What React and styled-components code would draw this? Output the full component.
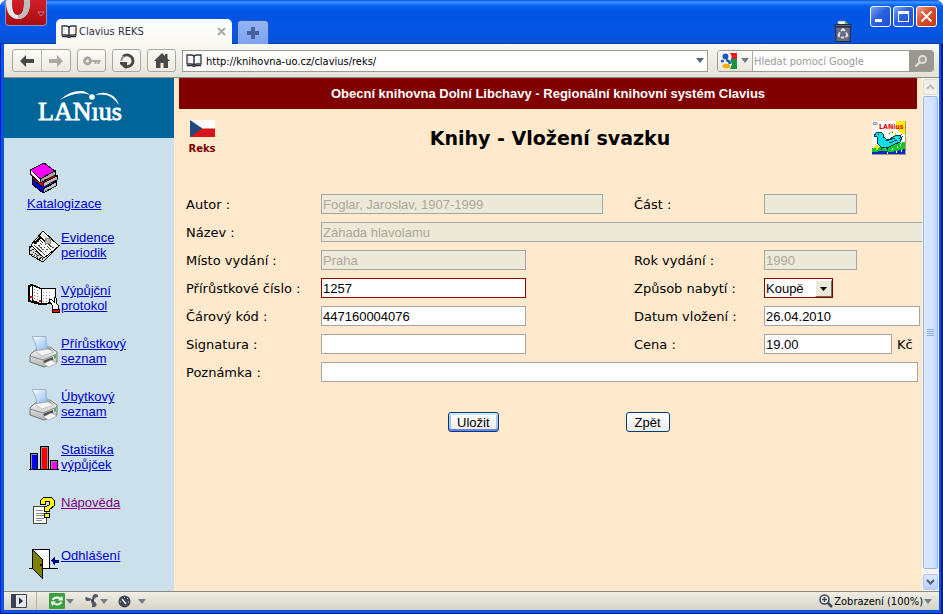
import React from "react";
import styled, { createGlobalStyle, css } from "styled-components";

const uiFont = '"DejaVu Sans Condensed", "DejaVu Sans", sans-serif';
const wideFont = '"DejaVu Sans", sans-serif';
const textFont = '"Liberation Sans", sans-serif';

const GlobalStyle = createGlobalStyle`
  *, *::before, *::after { box-sizing: border-box; }
  body { margin: 0; background: #fff; font-family: ${textFont}; font-size: 13px; color: #000; }
  button, input, select { font: inherit; color: inherit; margin: 0; }
  button { padding: 0; }
  svg { display: block; flex: none; }
`;

/* ---------- window frame ---------- */

const Frame = styled.div`
  display: flex;
  flex-direction: column;
  height: 100vh;
  padding: 0 4px 4px;
  border-radius: 8px 8px 0 0;
  background: #0855e0;
  box-shadow: inset 1px 0 #0019cf, inset -2px -1px #001ca0;
  overflow: hidden;
`;

const TitleBar = styled.header`
  display: flex;
  align-items: flex-end;
  flex: none;
  height: 44px;
  margin: 0 -4px;
  padding: 0 6px 0 5px;
  background: linear-gradient(#0a4fd8 0, #3a93ff 2px, #0560ee 6px, #0054e3 12px, #0556e6 30px, #0a50d2 43px, #003090 44px);
`;

const OperaButton = styled.button`
  align-self: flex-start;
  width: 42px;
  height: 26px;
  margin-right: 9px;
  border: 1px solid #8f8fd0;
  border-top: 0;
  border-radius: 0 0 4px 4px;
  background: linear-gradient(#d0202a, #a80c12);
  overflow: hidden;
`;

const Tab = styled.div`
  display: flex;
  align-items: center;
  gap: 2px;
  width: 176px;
  height: 25px;
  padding: 0 6px 0 5px;
  border-radius: 5px 5px 0 0;
  background: linear-gradient(#fff, #f9f8f2);
  font: 11px ${uiFont};
  color: #2c3045;
`;

const TabTitle = styled.span`
  flex: 1;
  white-space: nowrap;
`;

const PlainButton = styled.button`
  display: flex;
  align-items: center;
  justify-content: center;
  border: 0;
  background: none;
`;

const NewTab = styled(PlainButton)`
  width: 32px;
  height: 24px;
  margin-left: 5px;
  border-radius: 4px 4px 0 0;
  border: 1px solid #2456bd;
  border-bottom: 0;
  background: linear-gradient(#93b4f2, #7da4ee);
`;

const Trash = styled(PlainButton)`
  margin: 0 18px 1px auto;
`;

const WindowButtons = styled.div`
  display: flex;
  align-self: flex-start;
  gap: 2px;
  padding-top: 6px;
`;

const WindowButton = styled(PlainButton)`
  width: 21px;
  height: 21px;
  border: 1px solid #fff;
  border-radius: 3px;
  background: ${(p) => (p.$close ? "linear-gradient(135deg, #f0a088, #dd4d2b 45%, #c03a18)" : "linear-gradient(135deg, #7ea4f5, #2c62e0 45%, #1c4fd0)")};
`;

/* ---------- toolbar ---------- */

const Toolbar = styled.nav`
  display: flex;
  align-items: center;
  gap: 6px;
  flex: none;
  height: 34px;
  padding: 0 5px 0 8px;
  background: linear-gradient(#f9f8f2, #e4e1d8);
  border-bottom: 1px solid #908e84;
  font: 11px ${uiFont};
`;

const ToolGroup = styled.div`
  display: flex;
  height: 23px;
  border: 1px solid #a9a79e;
  border-radius: 3px;
  background: linear-gradient(#fcfbf8, #ebe9e0);
`;

const ToolButton = styled(PlainButton)`
  width: ${(p) => p.$width || 27}px;
  & + & { border-left: 1px solid #b4b2a8; }
`;

const AddressBar = styled.div`
  display: flex;
  align-items: center;
  gap: 3px;
  flex: 1;
  height: 22px;
  padding: 0 3px;
  border: 1px solid #9c9a92;
  background: #fff;
`;

const ToolInput = styled.input`
  flex: 1;
  min-width: 0;
  height: 20px;
  padding: 1px 1px 0;
  border: 0;
  outline: 0;
  background: none;
  &::placeholder { color: #999; opacity: 1; }
`;

const SearchBox = styled.div`
  display: flex;
  width: 217px;
  height: 22px;
  margin-left: 3px;
  border: 1px solid #9c9a92;
  border-radius: 3px;
  background: #fff;
  overflow: hidden;
`;

const SearchEngine = styled(PlainButton)`
  gap: 4px;
  width: 35px;
  border-right: 1px solid #a9a79e;
  background: linear-gradient(#fcfbf8, #e9e6dd);
`;

const SearchButton = styled(PlainButton)`
  width: 24px;
  background: #989790;
`;

/* ---------- page ---------- */

const Viewport = styled.div`
  display: flex;
  flex: 1;
  min-height: 0;
  background: #ffe9cc;
`;

const Sidebar = styled.aside`
  flex: none;
  width: 170px;
  background: #cce0eb;
  overflow: hidden;
`;

const Brand = styled.div`
  height: 60px;
  background: #006699;
`;

const Menu = styled.nav`
  display: flex;
  flex-direction: column;
  gap: 21px;
  padding: 24px 0 0 24px;
  line-height: 15px;
`;

const MenuLink = styled.a`
  display: flex;
  flex-direction: ${(p) => (p.$stacked ? "column" : "row")};
  gap: ${(p) => (p.$stacked ? "2px" : "1px")};
  min-height: 32px;
  color: ${(p) => (p.$visited ? "#800080" : "#0000cc")};
  text-decoration: underline;
  margin-left: ${(p) => (p.$stacked ? "-1px" : "0")};
  margin-bottom: ${(p) => (p.$stacked ? "-2px" : "0")};
`;

const MenuText = styled.span`
  width: 72px;
`;

const Main = styled.main`
  flex: 1;
  min-width: 0;
  overflow: hidden;
`;

const Banner = styled.div`
  margin: 0 5px;
  background: #800000;
  color: #fff;
  font-weight: bold;
  line-height: 31px;
  text-align: center;
`;

const PageHeader = styled.div`
  display: grid;
  grid-template-columns: 40px 1fr 34px;
  align-items: center;
  padding: 11px 16px 34px 14px;
`;

const Language = styled.a`
  display: flex;
  flex-direction: column;
  align-items: center;
  gap: 5px;
  width: 28px;
  color: #800000;
  font: bold 10px/14px ${wideFont};
  text-decoration: none;
`;

const Title = styled.h1`
  margin: 0;
  font: bold 19px/24px ${wideFont};
  text-align: center;
`;

const Form = styled.form`
  padding-left: 12px;
  font: 13px ${wideFont};
`;

const Fields = styled.div`
  display: grid;
  grid-template-columns: 135px 313px 130px 1fr;
  grid-auto-rows: 28px;
  align-items: center;
`;

const Label = styled.label`
  white-space: nowrap;
`;

const fieldBox = css`
  height: 20px;
  border: 1px solid ${(p) => (p.$required ? "#800000" : "#a5a5a5")};
  border-radius: 0;
  background: #fff;
  font: 13px ${textFont};
`;

const Field = styled.input`
  ${fieldBox}
  width: ${(p) => p.$width}px;
  padding: 0 1px;
  outline: 0;
  ${(p) => p.$wide && "grid-column: 2 / -1;"}
  &:disabled { background: #ece9d8; color: #aca899; }
`;

const Price = styled.div`
  display: flex;
  align-items: center;
  gap: 5px;
`;

const SelectWrap = styled.div`
  position: relative;
  width: 69px;
  height: 20px;
`;

const Select = styled.select`
  ${fieldBox}
  width: 100%;
  padding: 0 18px 0 1px;
  appearance: none;
  outline: 0;
`;

const SelectArrow = styled.span`
  position: absolute;
  top: 2px;
  right: 1px;
  bottom: 1px;
  display: flex;
  align-items: center;
  justify-content: center;
  width: 17px;
  background: #ece9d8;
  border: 1px solid;
  border-color: #fff #716f64 #716f64 #fff;
  pointer-events: none;
`;

const Actions = styled.div`
  display: flex;
  gap: 127px;
  padding: 26px 0 0 262px;
`;

const ActionButton = styled.button`
  height: 20px;
  padding: 0 8px;
  border: 1px solid #003c74;
  border-radius: 3px;
  background: linear-gradient(#fff, #ecebe6);
  font: 13px ${textFont};
  ${(p) => p.$primary && "box-shadow: inset 0 -2px #6982ee, inset 0 2px #cee7ff, inset 2px 0 #a9c2f2, inset -2px 0 #a9c2f2;"}
`;

/* ---------- scroll bar ---------- */

const ScrollTrack = styled.div`
  display: flex;
  flex-direction: column;
  flex: none;
  width: 17px;
  padding: 1px;
  background: #f5f4ee;
`;

const ScrollButton = styled(PlainButton)`
  flex: none;
  width: 15px;
  height: 16px;
  border: 1px solid ${(p) => (p.$off ? "#dddcd2" : "#b4c8f6")};
  border-radius: 2px;
  background: ${(p) => (p.$off ? "#f1f0e8" : "linear-gradient(#dce7ff, #b9cffa)")};
`;

const ScrollThumb = styled.div`
  display: flex;
  align-items: center;
  justify-content: center;
  flex: 1;
  margin: 1px 0 5px;
  border: 1px solid #98b4e8;
  border-radius: 2px;
  background: linear-gradient(90deg, #dbe8ff, #d2e2ff 70%, #bdd3fb);
`;

/* ---------- status bar ---------- */

const StatusBar = styled.footer`
  display: flex;
  align-items: center;
  flex: none;
  height: 19px;
  padding: 0 7px;
  border-top: 1px solid #8a887e;
  background: linear-gradient(#f1efe6, #d5d2c5);
  font: 11px ${uiFont};
`;

const StatusButton = styled(PlainButton)`
  gap: ${(p) => p.$gap || 1}px;
  height: 17px;
  margin-right: ${(p) => p.$after || 0}px;
`;

const StatusDivider = styled.span`
  width: 1px;
  height: 18px;
  margin: 0 12px 0 9px;
  background: #b5b3a8;
`;

const Zoom = styled(StatusButton)`
  margin-left: auto;
`;

/* ---------- drawings ---------- */

const Triangle = ({ color = "#777b88" }) => (
  <svg width="8" height="5" viewBox="0 0 8 5"><path d="M0 0h8L4 5z" fill={color} /></svg>
);

const OpenBook = () => (
  <svg width="16" height="13" viewBox="0 0 16 13">
    <path d="M1 1h4q2 0 3 1 1-1 3-1h4v9h-4q-2 0-3 1-1-1-3-1H1z" fill="#fff" stroke="#33363d" strokeWidth="1.3" />
    <path d="M8 2v9M1 11.6h5l2 1 2-1h5" fill="none" stroke="#22252b" strokeWidth="1.4" />
    <path d="M3 3v6M13 3v6" stroke="#d2d2d2" />
  </svg>
);

const OperaMark = () => (
  <svg width="40" height="25" viewBox="0 0 40 25">
    <path d="M0-6v8c0 11 5 17 12 17S24 13 24 2v-8h-6V3c0 6-1 12-6 12S6 9 6 3v-9z" fill="#e6e6e6" />
    <path d="M18-6V3c0 6-1 12-6 12v4c7 0 12-6 12-17v-8z" fill="#bcbcbc" />
    <path d="M32 12h6l-3 4z" fill="#7a1a26" stroke="#e58a8e" strokeWidth=".8" />
  </svg>
);

const Recycle = () => (
  <svg width="18" height="23" viewBox="0 0 18 23">
    <path d="M4 1h7l3 3v2H4z" fill="#f4f8f4" stroke="#7d8d80" strokeWidth=".8" />
    <path d="M11 1l3 3h-3z" fill="#55b56a" />
    <path d="M1 4.500h16v2H1zM1.500 7h15L16 21.500H2z" fill="#666d80" stroke="#242a3a" />
    <path d="M7 11l2-2 2 2M12 12.500l1.500 3-2 1.500M10 17.500H7M5.500 17l-1-2 1.500-2.500" fill="none" stroke="#fff" strokeWidth="1.500" />
  </svg>
);

const Arrow = ({ back }) => (
  <svg width="14" height="12" viewBox="0 0 14 12">
    {back ? <path d="M0 6l6-6v4h8v4H6v4z" fill="#484848" /> : <path d="M14 6L8 0v4H0v4h8v4z" fill="#aaa9a2" />}
  </svg>
);

const Key = () => (
  <svg width="18" height="10" viewBox="0 0 18 10">
    <circle cx="4.500" cy="5" r="3" fill="none" stroke="#a9a8a1" strokeWidth="2.800" />
    <path d="M8 5h9.500M12.500 5v3M15.500 5v3" fill="none" stroke="#a9a8a1" strokeWidth="2" />
  </svg>
);

const Reload = () => (
  <svg width="16" height="16" viewBox="0 0 16 16">
    <path d="M4 3.500A6 6 0 0 1 14 8 5.800 5.800 0 0 1 6 13.200" fill="none" stroke="#484848" strokeWidth="2.800" />
    <path d="M1 9h7v6.500H6L1 11z" fill="#484848" />
    <path d="M2.500 8A5.500 5.500 0 0 1 5 3" fill="none" stroke="#8c8c88" strokeWidth="1.800" />
  </svg>
);

const Home = () => (
  <svg width="16" height="15" viewBox="0 0 16 15">
    <path d="M8 0l3 3V1h2.500v4.500L16 8h-2v7H9.500v-5h-3v5H2V8H0z" fill="#484848" />
  </svg>
);

const GoogleMark = () => (
  <svg width="16" height="16" viewBox="0 0 16 16">
    <path d="M8 0h8v7H8z" fill="#e81c20" />
    <path d="M9 6h7v10H8z" fill="#129440" />
    <circle cx="6" cy="4" r="4.600" fill="#fff" />
    <path d="M3 11l6-4 2 4-2 5H2z" fill="#fff" />
    <ellipse cx="4.500" cy="3.500" rx="3" ry="3" fill="#1b55b8" />
    <ellipse cx="5.500" cy="13" rx="4" ry="2.600" fill="#f3ae18" />
    <path d="M5 7q4 1 4 4" fill="none" stroke="#1b55b8" strokeWidth="2.500" />
    <circle cx="1.500" cy="8" r="1.600" fill="#2865c5" />
  </svg>
);

const Lens = () => (
  <svg width="14" height="14" viewBox="0 0 14 14">
    <circle cx="8.500" cy="5.500" r="3.600" fill="#a5a49e" stroke="#e2e1dc" strokeWidth="1.700" />
    <path d="M6 8l-4.500 4.500" stroke="#e2e1dc" strokeWidth="2.200" />
  </svg>
);

const LaniusLogo = () => (
  <svg width="170" height="60" viewBox="0 0 170 60">
    <text x="34" y="42" fill="#fff" stroke="#fff" strokeWidth=".8" fontFamily="Liberation Serif, serif" fontSize="26">LANıus</text>
    <circle cx="88" cy="19" r="2.800" fill="#fff" />
    <path d="M56 22q10-10 23-9 4 1 7 4-12-5-30 5zM91 17q7-4 14-1 8 3 10 11-7-9-13-10-6-1-11 0z" fill="#fff" />
  </svg>
);

const CzechFlag = () => (
  <svg width="25" height="17" viewBox="0 0 25 17">
    <path d="M0 0h25v9H0z" fill="#fff" />
    <path d="M0 8.500h25V17H0z" fill="#d7141a" />
    <path d="M0 0l12.500 8.500L0 17z" fill="#234a7d" />
  </svg>
);

const BirdPicture = () => (
  <svg width="34" height="34" viewBox="0 0 34 34" shapeRendering="crispEdges">
    <path d="M0 0h33v33H0z" fill="#fff" />
    <path d="M24 0h9v13q-5 0-7-4t-2-5z" fill="#ffee00" />
    <path d="M21 10l-3 2M24 12l-2 4M28 14v4" stroke="#ffee00" fill="none" />
    <path d="M1 2l2-1 2 1v1l-2 1-2-1z" fill="#ddd" stroke="#999" />
    <text x="7" y="8" fill="#e60000" fontFamily="DejaVu Sans Condensed, sans-serif" fontWeight="bold" fontSize="7">LANius</text>
    <path d="M0 27l8-1 6 2 8-5 11-2v12H0z" fill="#12c828" />
    <path d="M0 31l12-1 8 1 13-3v5H0z" fill="#0828c8" />
    <path d="M2 15l3-4h4l2 2v3l5 3 7-4 6-1-1 3 2-1-2 5-5 2-6 3H9l-4-4V16z" fill="#10dce8" stroke="#003c48" />
    <path d="M14 20l9-3M17 22l8-3M10 26l-1 3M14 26l2 3" stroke="#003c48" fill="none" />
    <path d="M6 13h1" stroke="#000" />
    <path d="M2 26h5M4.500 24v5" stroke="#e8e800" strokeWidth="2" />
    <path d="M20 28h1M25 26h1M28 24h1M15 32h1M24 31h1M29 30h1" stroke="#fff" strokeWidth="1.500" />
    <path d="M17 12h1M20 11h1" stroke="#208030" />
    <path d="M33.500 0v33.500H0" fill="none" stroke="#a09a88" />
  </svg>
);

const MenuIcon = ({ children }) => (
  <svg width="32" height="32" viewBox="0 0 32 32" shapeRendering="crispEdges">{children}</svg>
);

const Books = () => (
  <MenuIcon>
    <path d="M6 18l-1 4 11 9 13-7v-4l-12-6z" fill="#0000e8" stroke="#000" />
    <path d="M16 27l13-7v4l-13 7z" fill="#c0c0c0" stroke="#000" />
    <path d="M6 13l-1 4 11 8 14-7v-4l-8-4z" fill="#f00000" stroke="#000" />
    <path d="M16 21l14-7v4l-14 7z" fill="#c0c0c0" stroke="#000" />
    <path d="M3 8v4l10 9 15-8V9L17 1z" fill="#b000b0" stroke="#000" />
    <path d="M13 17l15-8v4l-15 8z" fill="#a8a8a8" stroke="#000" />
    <path d="M3 8L17 1l11 8-15 8z" fill="#ff00ff" stroke="#000" />
    <path d="M4 9v3l9 8v-3z" fill="#fff" />
    <path d="M15 19l12-6M18 24l11-6M18 29l10-5" stroke="#606060" strokeDasharray="1 1" />
  </MenuIcon>
);

const Newspaper = () => (
  <MenuIcon>
    <path d="M1 17v7l5 3 9 5 16-16z" fill="#d8d8d0" stroke="#000" />
    <path d="M2 17l13 10M2 20l13 9M3 24l12 6" stroke="#333" strokeDasharray="2 1" />
    <path d="M3 15L15 1l16 15-15 12z" fill="#f4f4ec" stroke="#000" />
    <path d="M11 6l6 5M6 14l7-7" stroke="#111" strokeWidth="1.500" />
    <g stroke="#555" fill="none">
      <path d="M8 13l10 9M10 11l4 4M16 17l5 4M17 14l6 6M22 15l4 3M14 22l3 3" strokeDasharray="2 1" />
      <path d="M6 15l10 9M12 10l3 3M19 13l6 5" />
    </g>
    <path d="M13 3l9 9" stroke="#ccc" />
    <circle cx="20" cy="11" r="3" fill="#b8b8b0" stroke="#888" />
  </MenuIcon>
);

const Ledger = () => (
  <MenuIcon>
    <path d="M1 3v15l11 3 14-1V6H13L4 2z" fill="#fff" stroke="#000" strokeWidth="2" />
    <path d="M4 2l9 4v15l-9-4zM13 6l3-1h11v14l-14 2z" fill="#fff" stroke="#000" />
    <path d="M6 6l5 2M6 9l5 2M6 12l5 2M6 15l5 2M15 9h9M15 12h9M15 15h9M15 18h7" stroke="#888" strokeDasharray="1 2" />
    <path d="M2 14h3M12 17v2" stroke="#f00" strokeWidth="1.500" />
    <path d="M21 17l2-1 3 3v-5l2 1 1 6 1 1v5h-5l-1-5z" fill="#fff" stroke="#000" />
    <path d="M24.500 26.500h7v3h-7z" fill="#f00" stroke="#000" />
  </MenuIcon>
);

const Printer = () => (
  <svg width="32" height="32" viewBox="0 0 32 32">
    <defs>
      <linearGradient id="sheet" x1="0" y1="0" x2="1" y2="1">
        <stop offset="0" stopColor="#fff" /><stop offset="1" stopColor="#84b9f2" />
      </linearGradient>
      <linearGradient id="case" x1="0" y1="0" x2="0" y2="1">
        <stop offset="0" stopColor="#fafafa" /><stop offset="1" stopColor="#b4b4b4" />
      </linearGradient>
    </defs>
    <path d="M2 20q0-2 3-4l5-4 12-1 7 5v10L16 31 2 26z" fill="url(#case)" stroke="#777" />
    <path d="M7 15l3-3h12l3 3-12 4z" fill="#999" />
    <path d="M4 .5h14q-1 5 2 12l-11 2Q8 6 4 .5z" fill="url(#sheet)" stroke="#8b9fb6" strokeWidth=".7" />
    <path d="M7 15l13-2 6 3-12 4z" fill="#f4f4f4" stroke="#aaa" strokeWidth=".6" />
    <path d="M2 20l13 4 14-6" fill="none" stroke="#888" />
    <path d="M15 25l10-4v3l-8 4z" fill="#4b4b4b" />
    <path d="M15 28l8-4 6 3-8 4z" fill="#f5f7fa" stroke="#999" strokeWidth=".6" />
    <path d="M26 20l2-1v3l-2 1z" fill="#3fb43c" />
  </svg>
);

const Chart = () => (
  <MenuIcon>
    <path d="M2 11h8v17H2zM12 4h9v24h-9zM22 18h8v10h-8z" fill="#000" />
    <path d="M3 12h6v15H3zM13 5h7v22h-7zM23 19h6v8h-6z" fill="#909090" />
    <path d="M4 13h5v14H4z" fill="#0000ff" />
    <path d="M14 6h5v21h-5z" fill="#ff0000" />
    <path d="M24 20h5v7h-5z" fill="#ff00ff" />
    <path d="M1 27h30v1H1z" fill="#000" />
  </MenuIcon>
);

const Help = () => (
  <MenuIcon>
    <path d="M5.500 11.500h13v17h-13z" fill="#fff" stroke="#444" />
    <path d="M8 15.500h7M8 18.500h8M8 20.500h8M8 23.500h8M8 25.500h6" stroke="#888" />
    <path d="M12.500 9.500v-4l3-3h8l3 3v5l-5 4v2h-5v-4l5-3v-3h-4v3z" fill="#ff0" stroke="#000" />
    <path d="M16.500 18.500h5v4h-5z" fill="#ff0" stroke="#000" />
  </MenuIcon>
);

const Door = () => (
  <MenuIcon>
    <path d="M4.500 1.500h17v19h-17z" fill="#fff" stroke="#000" />
    <path d="M1 20.500h29" stroke="#000" />
    <path d="M4.500 1.500l10 10v19l-10-10z" fill="#808000" stroke="#000" />
    <path d="M12 17h2" stroke="#000" strokeWidth="2" />
    <path d="M23 12.500l4-4v3h4v3h-4v3z" fill="#000080" />
  </MenuIcon>
);

const PanelIcon = () => (
  <svg width="16" height="14" viewBox="0 0 16 14">
    <path d="M.5.500h15v13H.5z" fill="#e8e9ee" stroke="#3b4256" />
    <path d="M0 0h5v14H0z" fill="#3b4256" />
    <path d="M8 3.500v7l4-3.500z" fill="#20283c" />
  </svg>
);

const SyncIcon = () => (
  <svg width="16" height="16" viewBox="0 0 16 16">
    <rect width="16" height="16" rx="1" fill="#3aa142" />
    <path d="M3.500 7Q5 4.500 8 4.500q1.500 0 3 1M12.500 9Q11 11.500 8 11.500q-1.500 0-3-1" fill="none" stroke="#fff" strokeWidth="1.800" />
    <path d="M9 7.500h5L13 3zM7 8.500H2L3 13z" fill="#fff" />
  </svg>
);

const FanIcon = () => (
  <svg width="14" height="14" viewBox="0 0 14 14">
    <path d="M7.500 6q-1-5 2.500-6 4 0 3 3-3 0-4 3z" fill="#555a68" />
    <path d="M6.500 5.500Q3.500 8 1 6.500-.5 4 1 3q3 1 6 2z" fill="#555a68" />
    <path d="M8 7q4 1 3.500 4.500Q10 14 7 13q1-3-1-5z" fill="#555a68" />
    <circle cx="7.500" cy="6.500" r="1.500" fill="#303542" />
  </svg>
);

const GaugeIcon = () => (
  <svg width="13" height="13" viewBox="0 0 13 13">
    <circle cx="6.500" cy="6.500" r="6" fill="#3e4557" />
    <path d="M4 4l4 5" stroke="#fff" strokeWidth="1.500" />
    <path d="M2 7h1M10 7h1M6.500 2v1M9 4l1-1" stroke="#cfd3dd" />
  </svg>
);

const ZoomIcon = () => (
  <svg width="14" height="14" viewBox="0 0 14 14">
    <circle cx="5.500" cy="5.500" r="4.500" fill="#f4f3ee" stroke="#3e4557" strokeWidth="1.600" />
    <path d="M3 5.500h5M5.500 3v5" stroke="#3e4557" strokeWidth="1.500" />
    <path d="M9 9l4 4" stroke="#3e4557" strokeWidth="2.500" />
  </svg>
);

const Chevron = ({ up, color = "#4d6185" }) => (
  <svg width="9" height="6" viewBox="0 0 9 6">
    <path d={up ? "M1 5l3.500-3.500L8 5" : "M1 1l3.500 3.500L8 1"} fill="none" stroke={color} strokeWidth="2" />
  </svg>
);

/* ---------- page data ---------- */

const menu = [
  { text: "Katalogizace", Icon: Books, stacked: true },
  { text: "Evidence periodik", Icon: Newspaper },
  { text: "Výpůjční protokol", Icon: Ledger },
  { text: "Přírůstkový seznam", Icon: Printer },
  { text: "Úbytkový seznam", Icon: Printer },
  { text: "Statistika výpůjček", Icon: Chart },
  { text: "Nápověda", Icon: Help, visited: true },
  { text: "Odhlášení", Icon: Door },
];

function BrowserChrome() {
  return (
    <>
      <TitleBar>
        <OperaButton aria-label="Opera"><OperaMark /></OperaButton>
        <Tab>
          <OpenBook />
          <TabTitle>Clavius REKS</TabTitle>
          <PlainButton aria-label="Zavřít panel">
            <svg width="9" height="9" viewBox="0 0 9 9"><path d="M1 1l7 7M8 1L1 8" stroke="#aaa9a4" strokeWidth="2" /></svg>
          </PlainButton>
        </Tab>
        <NewTab aria-label="Nový panel">
          <svg width="12" height="12" viewBox="0 0 12 12"><path d="M4 0h4v4h4v4H8v4H4V8H0V4h4z" fill="#48619c" /></svg>
        </NewTab>
        <Trash aria-label="Zavřené panely"><Recycle /></Trash>
        <WindowButtons>
          <WindowButton aria-label="Minimalizovat">
            <svg width="13" height="13" viewBox="0 0 13 13"><path d="M1 9h7v3H1z" fill="#fff" /></svg>
          </WindowButton>
          <WindowButton aria-label="Maximalizovat">
            <svg width="13" height="13" viewBox="0 0 13 13"><path d="M1 1h11v11H1zM2 4v7h9V4z" fill="#fff" fillRule="evenodd" /></svg>
          </WindowButton>
          <WindowButton $close aria-label="Zavřít">
            <svg width="13" height="13" viewBox="0 0 13 13"><path d="M1.500 1.500l10 10M11.500 1.500l-10 10" stroke="#fff" strokeWidth="2" /></svg>
          </WindowButton>
        </WindowButtons>
      </TitleBar>
      <Toolbar>
        <ToolGroup>
          <ToolButton $width={28} aria-label="Zpět"><Arrow back /></ToolButton>
          <ToolButton $width={29} aria-label="Vpřed"><Arrow /></ToolButton>
        </ToolGroup>
        <ToolGroup><ToolButton aria-label="Heslo"><Key /></ToolButton></ToolGroup>
        <ToolGroup><ToolButton aria-label="Obnovit"><Reload /></ToolButton></ToolGroup>
        <ToolGroup><ToolButton aria-label="Domů"><Home /></ToolButton></ToolGroup>
        <AddressBar>
          <OpenBook />
          <ToolInput aria-label="Adresa" defaultValue="http://knihovna-uo.cz/clavius/reks/" />
          <Triangle color="#5a6580" />
        </AddressBar>
        <SearchBox>
          <SearchEngine aria-label="Vyhledávač"><GoogleMark /><Triangle /></SearchEngine>
          <ToolInput aria-label="Hledat" placeholder="Hledat pomocí Google" />
          <SearchButton aria-label="Hledat"><Lens /></SearchButton>
        </SearchBox>
      </Toolbar>
    </>
  );
}

function BookForm() {
  return (
    <Form onSubmit={(e) => e.preventDefault()}>
      <Fields>
        <Label htmlFor="autor">Autor :</Label>
        <Field id="autor" $width={282} disabled defaultValue="Foglar, Jaroslav, 1907-1999" />
        <Label htmlFor="cast">Část :</Label>
        <Field id="cast" $width={93} disabled />

        <Label htmlFor="nazev">Název :</Label>
        <Field id="nazev" $width={640} $wide disabled defaultValue="Záhada hlavolamu" />

        <Label htmlFor="misto">Místo vydání :</Label>
        <Field id="misto" $width={205} disabled defaultValue="Praha" />
        <Label htmlFor="rok">Rok vydání :</Label>
        <Field id="rok" $width={93} disabled defaultValue="1990" />

        <Label htmlFor="cislo">Přírůstkové číslo :</Label>
        <Field id="cislo" $width={205} $required defaultValue="1257" />
        <Label htmlFor="zpusob">Způsob nabytí :</Label>
        <SelectWrap>
          <Select id="zpusob" $required defaultValue="Koupě"><option>Koupě</option></Select>
          <SelectArrow><svg width="7" height="4" viewBox="0 0 7 4"><path d="M0 0h7L3.500 4z" /></svg></SelectArrow>
        </SelectWrap>

        <Label htmlFor="kod">Čárový kód :</Label>
        <Field id="kod" $width={205} defaultValue="447160004076" />
        <Label htmlFor="datum">Datum vložení :</Label>
        <Field id="datum" $width={156} defaultValue="26.04.2010" />

        <Label htmlFor="signatura">Signatura :</Label>
        <Field id="signatura" $width={205} />
        <Label htmlFor="cena">Cena :</Label>
        <Price><Field id="cena" $width={128} defaultValue="19.00" />Kč</Price>

        <Label htmlFor="poznamka">Poznámka :</Label>
        <Field id="poznamka" $width={597} $wide />
      </Fields>
      <Actions>
        <ActionButton type="submit" $primary>Uložit</ActionButton>
        <ActionButton type="button">Zpět</ActionButton>
      </Actions>
    </Form>
  );
}

export default function App() {
  return (
    <Frame>
      <GlobalStyle />
      <BrowserChrome />
      <Viewport>
        <Sidebar>
          <Brand><LaniusLogo /></Brand>
          <Menu>
            {menu.map(({ text, Icon, stacked, visited }) => (
              <MenuLink key={text} href="#" $stacked={stacked} $visited={visited}>
                <Icon />
                <MenuText>{text}</MenuText>
              </MenuLink>
            ))}
          </Menu>
        </Sidebar>
        <Main>
          <Banner>Obecní knihovna Dolní Libchavy - Regionální knihovní systém Clavius</Banner>
          <PageHeader>
            <Language href="#"><CzechFlag />Reks</Language>
            <Title>Knihy - Vložení svazku</Title>
            <BirdPicture />
          </PageHeader>
          <BookForm />
        </Main>
        <ScrollTrack>
          <ScrollButton $off aria-label="Nahoru"><Chevron up color="#c0bfb4" /></ScrollButton>
          <ScrollThumb>
            <svg width="7" height="8" viewBox="0 0 7 8"><path d="M0 .5h7M0 2.500h7M0 4.500h7M0 6.500h7" stroke="#8eaee8" /></svg>
          </ScrollThumb>
          <ScrollButton aria-label="Dolů"><Chevron /></ScrollButton>
        </ScrollTrack>
      </Viewport>
      <StatusBar>
        <StatusButton aria-label="Panely"><PanelIcon /></StatusButton>
        <StatusDivider />
        <StatusButton $after={11} aria-label="Synchronizace"><SyncIcon /><Triangle /></StatusButton>
        <StatusButton $after={10} aria-label="Turbo"><FanIcon /><Triangle /></StatusButton>
        <StatusButton $gap={7} aria-label="Rychlost"><GaugeIcon /><Triangle /></StatusButton>
        <Zoom><ZoomIcon />Zobrazení (100%)<Triangle /></Zoom>
      </StatusBar>
    </Frame>
  );
}
